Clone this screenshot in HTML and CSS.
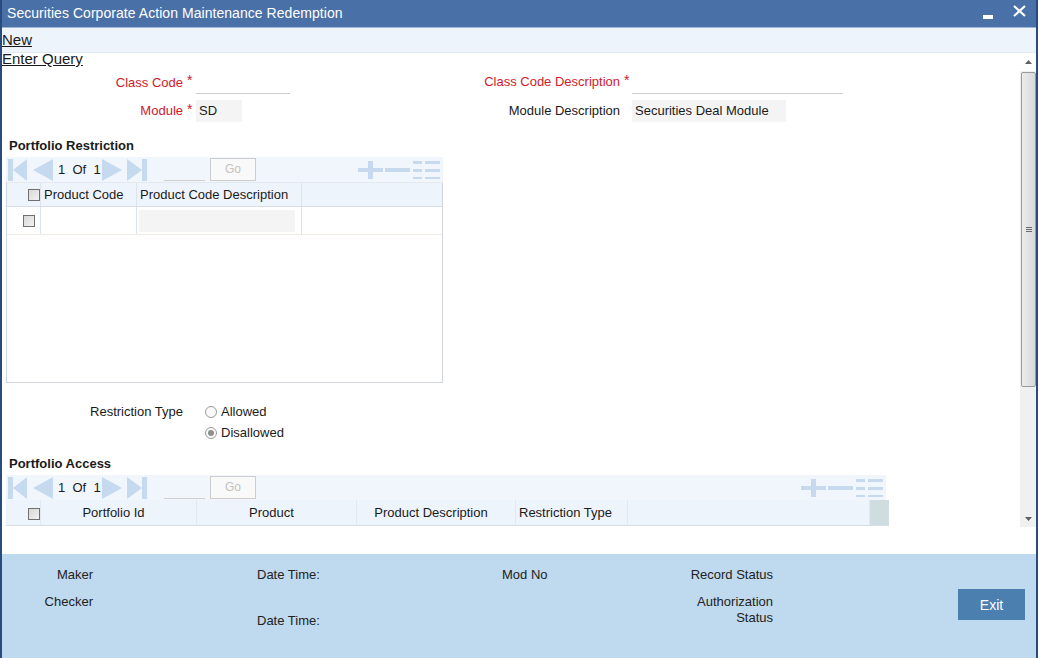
FILE: index.html
```html
<!DOCTYPE html>
<html>
<head>
<meta charset="utf-8">
<link rel="stylesheet" href="styles.css">
</head>
<body>
<div class="window">
  <header class="titlebar">
    <span class="title">Securities Corporate Action Maintenance Redemption</span>
    <span class="ctrls">
      <svg class="ctl-min" width="10" height="4" viewBox="0 0 10 4"><rect x="0" y="0" width="10" height="4" fill="#fff"/></svg>
      <svg class="ctl-close" width="13" height="12" viewBox="0 0 13 12"><path d="M1 1 L12 11 M12 1 L1 11" stroke="#fff" stroke-width="2.2" fill="none"/></svg>
    </span>
  </header>
  <nav class="menubar"><a class="menu-link">New</a></nav>
  <div class="main">
    <div class="scrollwrap">
      <div class="content">
        <a class="menu-link eq">Enter Query</a>
        <div class="form">
          <div class="lbl req">Class Code</div><div class="star">*</div>
          <div class="fcell"><div class="inp-line w94"></div></div>
          <div class="lbl req">Class Code Description</div><div class="star">*</div>
          <div class="fcell"><div class="inp-line w211"></div></div>

          <div class="lbl req">Module</div><div class="star">*</div>
          <div class="fcell"><div class="inp-box w46">SD</div></div>
          <div class="lbl">Module Description</div><div class="star"></div>
          <div class="fcell"><div class="inp-box w154">Securities Deal Module</div></div>
        </div>

        <h3 class="sect">Portfolio Restriction</h3>
        <div class="block b1">
          <div class="toolbar">
            <svg class="nav first" width="20" height="22" viewBox="0 0 20 22"><rect x="0" y="0" width="5" height="22"/><polygon points="19,0 19,22 5,11"/></svg>
            <svg class="nav prev" width="20" height="22" viewBox="0 0 20 22"><polygon points="20,0 20,22 0,11"/></svg>
            <span class="pg">1&nbsp; Of&nbsp; 1</span>
            <svg class="nav next" width="20" height="22" viewBox="0 0 20 22"><polygon points="0,0 0,22 20,11"/></svg>
            <svg class="nav last" width="20" height="22" viewBox="0 0 20 22"><polygon points="0,0 0,22 15,11"/><rect x="15" y="0" width="5" height="22"/></svg>
            <span class="pg-input"></span>
            <span class="go">Go</span>
            <span class="acts">
              <svg width="25" height="18" viewBox="0 0 25 18"><rect x="0" y="7" width="25" height="4"/><rect x="10" y="0" width="5" height="18"/></svg>
              <svg width="25" height="18" viewBox="0 0 25 18"><rect x="0" y="7" width="25" height="4"/></svg>
              <svg width="27" height="18" viewBox="0 0 27 18"><rect x="0" y="0" width="9" height="3"/><rect x="12" y="0" width="15" height="3"/><rect x="0" y="8" width="9" height="3"/><rect x="12" y="8" width="15" height="3"/><rect x="0" y="16" width="9" height="2"/><rect x="12" y="16" width="15" height="2"/></svg>
            </span>
          </div>
          <div class="tbl1">
            <div class="row1 head">
              <div class="cell chk-h"><span class="cb"></span></div>
              <div class="cell">Product Code</div>
              <div class="cell">Product Code Description</div>
              <div class="cell last"></div>
            </div>
            <div class="row1 data">
              <div class="cell chk-d"><span class="cb"></span></div>
              <div class="cell"></div>
              <div class="cell"><div class="cell-box"></div></div>
              <div class="cell last"></div>
            </div>
          </div>
        </div>

        <div class="radios">
          <div class="rlbl">Restriction Type</div>
          <div class="ropts">
            <label class="ropt"><span class="rb"></span>Allowed</label>
            <label class="ropt"><span class="rb on"></span>Disallowed</label>
          </div>
        </div>

        <h3 class="sect s2">Portfolio Access</h3>
        <div class="block b2">
          <div class="toolbar">
            <svg class="nav first" width="20" height="22" viewBox="0 0 20 22"><rect x="0" y="0" width="5" height="22"/><polygon points="19,0 19,22 5,11"/></svg>
            <svg class="nav prev" width="20" height="22" viewBox="0 0 20 22"><polygon points="20,0 20,22 0,11"/></svg>
            <span class="pg">1&nbsp; Of&nbsp; 1</span>
            <svg class="nav next" width="20" height="22" viewBox="0 0 20 22"><polygon points="0,0 0,22 20,11"/></svg>
            <svg class="nav last" width="20" height="22" viewBox="0 0 20 22"><polygon points="0,0 0,22 15,11"/><rect x="15" y="0" width="5" height="22"/></svg>
            <span class="pg-input"></span>
            <span class="go">Go</span>
            <span class="acts">
              <svg width="25" height="18" viewBox="0 0 25 18"><rect x="0" y="7" width="25" height="4"/><rect x="10" y="0" width="5" height="18"/></svg>
              <svg width="25" height="18" viewBox="0 0 25 18"><rect x="0" y="7" width="25" height="4"/></svg>
              <svg width="27" height="18" viewBox="0 0 27 18"><rect x="0" y="0" width="9" height="3"/><rect x="12" y="0" width="15" height="3"/><rect x="0" y="8" width="9" height="3"/><rect x="12" y="8" width="15" height="3"/><rect x="0" y="16" width="9" height="2"/><rect x="12" y="16" width="15" height="2"/></svg>
            </span>
          </div>
          <div class="row2 head">
            <div class="cell chk-h2"><span class="cb"></span></div>
            <div class="cell ctr">Portfolio Id</div>
            <div class="cell ctr">Product</div>
            <div class="cell ctr">Product Description</div>
            <div class="cell">Restriction Type</div>
            <div class="cell"></div>
            <div class="cell grey"></div>
          </div>
        </div>
      </div>
      <div class="vscroll">
        <div class="sb-btn"><svg width="7" height="4" viewBox="0 0 7 4"><polygon points="0,4 7,4 3.5,0" fill="#606060"/></svg></div>
        <div class="sb-thumb"><span class="grip"></span><span class="grip"></span><span class="grip"></span></div>
        <div class="sb-track"></div>
        <div class="sb-btn"><svg width="7" height="4" viewBox="0 0 7 4"><polygon points="0,0 7,0 3.5,4" fill="#606060"/></svg></div>
      </div>
    </div>
  </div>
  <footer class="footer">
    <div class="fc fc1"><div class="fl">Maker</div><div class="fl">Checker</div></div>
    <div class="fc fc2"><div class="fl">Date Time:</div><div class="fl dt2">Date Time:</div></div>
    <div class="fc fc3"><div class="fl">Mod No</div></div>
    <div class="fc fc4"><div class="fl">Record Status</div><div class="fl auth">Authorization<br>Status</div></div>
    <button class="exit">Exit</button>
  </footer>
</div>
</body>
</html>
```

FILE: styles.css
```css
* { box-sizing: border-box; }
html, body { margin: 0; padding: 0; }
body {
  width: 1038px;
  height: 658px;
  overflow: hidden;
  font-family: "Liberation Sans", Arial, sans-serif;
  font-size: 13px;
  color: #1a1a1a;
  background: #fff;
}
.window {
  height: 658px;
  display: flex;
  flex-direction: column;
  border-left: 2px solid #294b7d;
  border-right: 2px solid #294b7d;
}
.titlebar {
  height: 28px;
  flex: none;
  background: #4a70a8;
  border-bottom: 1px solid #9fb5d6;
  display: flex;
  align-items: center;
  padding-left: 5px;
  color: #fff;
}
.title { font-size: 14px; line-height: 16px; margin-top: -2px; letter-spacing: 0.05px; }
.ctrls { margin-left: auto; display: flex; align-items: center; }
.ctl-min { margin-top: 7px; margin-right: 20px; }
.ctl-close { margin-top: -6px; margin-right: 10px; }

.menubar {
  height: 25px;
  flex: none;
  background: #eef4fc;
  border-bottom: 1px solid #e2e8f0;
  padding-top: 4px;
}
.menu-link {
  display: block;
  font-size: 15px;
  line-height: 16px;
  color: #1a1a1a;
  text-decoration: underline;
  width: max-content;
}
.main {
  height: 501px;
  flex: none;
  background: #fff;
}
.scrollwrap {
  height: 474px;
  display: flex;
}
.content {
  flex: 1;
  min-width: 0;
}
.eq { line-height: 16px; margin-top: -2px; }

.form {
  display: grid;
  grid-template-columns: 181px 13px 264px 160px 12px 212px;
  grid-template-rows: 23px 22px;
  row-gap: 6px;
  margin-top: 4px;
}
.lbl {
  text-align: right;
  line-height: 22px;
  white-space: nowrap;
}
.lbl.req { color: #d0192b; }
.lbl.req:first-child { line-height: 24px; }
.star {
  color: #d0192b;
  padding-left: 4px;
  line-height: 18px;
  font-size: 14px;
}
.fcell { display: flex; }
.inp-line { height: 23px; border-bottom: 1px solid #cfcfcf; }
.inp-box {
  height: 22px;
  background: #f4f4f4;
  line-height: 22px;
  padding-left: 3px;
  white-space: nowrap;
}
.w94 { width: 94px; }
.w211 { width: 211px; }
.w46 { width: 46px; }
.w154 { width: 154px; }

.sect {
  margin: 16px 0 0 7px;
  font-size: 13px;
  font-weight: bold;
  line-height: 16px;
  color: #1a1a1a;
}
.block { margin: 3px 0 0 4px; }
.b1 { width: 437px; }
.b2 { width: 883px; }
.toolbar {
  height: 25px;
  background: #f1f6fc;
  display: flex;
  align-items: center;
  padding-left: 2px;
}
.b2 .toolbar { width: 880px; }
.nav { fill: #c5d9ef; flex: none; }
.prev { margin-left: 5px; }
.pg { margin-left: 5px; width: 44px; white-space: nowrap; }
.next { margin-left: 0; }
.last { margin-left: 5px; }
.pg-input {
  width: 41px;
  height: 24px;
  margin-left: 17px;
  border-bottom: 1px solid #cfcfcf;
  align-self: flex-start;
}
.go {
  margin-left: 5px;
  width: 46px;
  height: 23px;
  border: 1px solid #cdcdcd;
  background: #f9f9f9;
  color: #c2c2c2;
  font-size: 12px;
  line-height: 21px;
  text-align: center;
}
.acts {
  margin-left: auto;
  margin-right: 3px;
  display: flex;
  gap: 2px;
  fill: #c7d9ef;
  margin-top: 1px;
}
.acts svg { display: block; }
.acts svg:nth-child(3) { margin-left: 1px; }

.tbl1 {
  width: 437px;
  height: 201px;
  border: 1px solid #d2d6da;
  border-top-color: #e4e9ef;
}
.row1 {
  display: grid;
  grid-template-columns: 34px 96px 165px 1fr;
}
.row1.head { height: 24px; background: #eef4fc; border-bottom: 1px solid #d6dde7; }
.row1.data { height: 28px; border-bottom: 1px solid #f0ebe3; }
.cell {
  border-right: 1px solid #dde3eb;
  display: flex;
  align-items: center;
  padding-left: 3px;
  white-space: nowrap;
}
.cell.last { border-right: none; }
.chk-h { justify-content: flex-end; padding-right: 0; padding-left: 0; }
.chk-d { padding-left: 16px; }
.cb {
  width: 12px;
  height: 12px;
  border: 1px solid #707070;
  background: linear-gradient(135deg, #d8d8d8, #f2f2f2);
  display: inline-block;
}
.cell-box { width: 156px; height: 22px; background: #f4f4f4; margin-left: -1px; }

.radios {
  display: flex;
  margin-top: 21px;
}
.rlbl { width: 181px; text-align: right; line-height: 16px; }
.ropts { margin-left: 22px; display: flex; flex-direction: column; gap: 5px; }
.ropt { display: flex; align-items: center; line-height: 16px; gap: 4px; }
.rb {
  width: 12px;
  height: 12px;
  border-radius: 50%;
  border: 1px solid #9a9a9a;
  background: #fafafa;
  position: relative;
}
.rb.on::after {
  content: "";
  position: absolute;
  left: 2px; top: 2px;
  width: 6px; height: 6px;
  border-radius: 50%;
  background: #8e8e8e;
}
.s2 { margin-top: 15px; }

.row2 {
  display: grid;
  grid-template-columns: 35px 156px 160px 159px 112px 242px 19px;
  height: 26px;
  background: #eef4fc;
  border-bottom: 1px solid #d6dde7;
}
.row2 .cell { border-right-color: #e2e8f0; }
.cell.ctr { justify-content: center; padding-left: 0; padding-right: 10px; }
.chk-h2 { padding-left: 22px; }
.chk-h2 .cb { margin-top: 3px; }
.cell.grey { background: #cfdde0; border-right: none; }

.vscroll {
  width: 16px;
  flex: none;
  display: flex;
  flex-direction: column;
  background: #f0f0f0;
  margin-top: 1px;
}
.sb-btn { height: 17px; display: flex; align-items: center; justify-content: center; background: #fff; }
.sb-btn:first-child { padding-bottom: 1px; }
.sb-btn:last-child { background: #f0f0f0; height: 16px; }
.sb-thumb {
  height: 315px;
  margin: 1px 0 0 1px;
  border: 1px solid #9a9a9a;
  border-radius: 2px;
  background: linear-gradient(to right, #ececec, #d9d9d9);
  display: flex;
  flex-direction: column;
  align-items: center;
  justify-content: center;
  gap: 1px;
}
.grip { width: 6px; height: 1px; background: #6a6a6a; }
.sb-track { flex: 1; }

.footer {
  flex: 1;
  background: #bfd9ee;
  display: flex;
  align-items: flex-start;
  padding-top: 13px;
  color: #222;
}
.fl { line-height: 16px; white-space: nowrap; }
.fc1 { width: 91px; text-align: right; display: flex; flex-direction: column; gap: 11px; }
.fc2 { margin-left: 164px; width: 245px; }
.dt2 { margin-top: 30px; }
.fc3 { width: 171px; }
.fc4 { width: 100px; text-align: right; display: flex; flex-direction: column; gap: 11px; }
.exit {
  margin-left: 185px;
  margin-top: 22px;
  width: 67px;
  height: 31px;
  border: none;
  background: #4a7fb0;
  color: #fff;
  font-family: "Liberation Sans", Arial, sans-serif;
  font-size: 14px;
  padding: 0;
}
```
